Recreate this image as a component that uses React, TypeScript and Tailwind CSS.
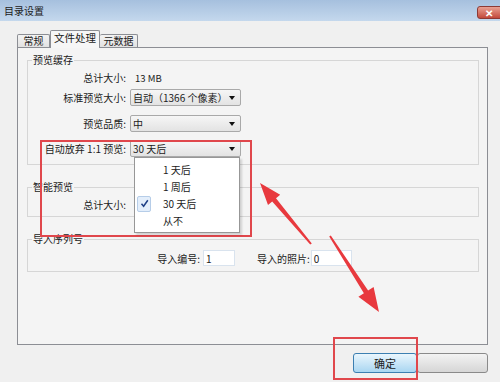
import React from 'react'

function Caret() {
  return <span className="mr-[5px] w-0 h-0 border-l-[3px] border-r-[3px] border-t-[4px] border-l-transparent border-r-transparent border-t-[#111]" />
}

function Dropdown({ value, children }: { value: string; children?: React.ReactNode }) {
  return (
    <div className="relative w-[111px] h-[17px]">
      <div className="flex items-center h-full border border-[#a9a9a9] rounded-[2px] bg-linear-to-b from-[#f6f6f6] to-[#e3e3e3] pl-[2px]">
        <span className="flex-1 whitespace-nowrap overflow-hidden">{value}</span>
        <Caret />
      </div>
      {children}
    </div>
  )
}

function Row({ label, children, className = '' }: { label: string; children?: React.ReactNode; className?: string }) {
  return (
    <div className={`flex items-center h-[17px] ${className}`}>
      <div className="w-[98px] text-right whitespace-nowrap">{label}</div>
      <div className="ml-[4px]">{children}</div>
    </div>
  )
}

function Group({ title, children, className = '' }: { title: string; children: React.ReactNode; className?: string }) {
  return (
    <fieldset className={`border border-[#d6d6d6] ${className}`}>
      <legend className="ml-[4px] px-[1px] leading-[12px]">{title}</legend>
      {children}
    </fieldset>
  )
}

const options = ['1 天后', '1 周后', '30 天后', '从不']

export default function App() {
  return (
    <div className="relative w-[500px] h-[382px] overflow-hidden bg-[#f0f0f0] text-[10px] text-[#1b1b1b] font-['Noto_Sans_CJK_SC','Noto_Sans',sans-serif]">
      {/* title bar */}
      <div className="flex h-[21px] bg-linear-to-b from-[#a6c0de] to-[#c4d8ed]">
        <span className="pl-[4px] pt-[5px] leading-[12px]">目录设置</span>
        <div className="ml-auto mt-[6px] -mr-[6px] w-[29px] h-[13px] rounded-[3px] border border-[#8d3a35] bg-linear-to-b from-[#e8a093] to-[#c2483b] flex items-center justify-center">
          <span className="text-white text-[10px] leading-none font-bold pr-[6px]">✕</span>
        </div>
      </div>

      {/* tabs */}
      <div className="flex items-end h-[17px] mt-[9px] pl-[17px]">
        <div className="w-[33px] h-[13px] border border-b-0 border-[#8c8e94] rounded-t-[2px] bg-linear-to-b from-[#f3f3f3] to-[#e2e2e2] flex items-center justify-center leading-none">常规</div>
        <div className="relative z-10 -mb-px w-[50px] h-[18px] border border-b-0 border-[#8c8e94] rounded-t-[2px] bg-[#f6f6f6] flex items-center justify-center leading-none pb-[2px] text-[10.5px]">文件处理</div>
        <div className="w-[38px] h-[13px] border border-b-0 border-l-0 border-[#8c8e94] rounded-t-[2px] bg-linear-to-b from-[#f3f3f3] to-[#e2e2e2] flex items-center justify-center leading-none">元数据</div>
      </div>

      {/* panel */}
      <div className="ml-[17px] w-[471px] h-[298px] border border-[#8c8e94] bg-[#f4f4f4] pl-[9px] pr-[8px] pt-[6px]">
        <Group title="预览缓存" className="pt-[3px] pb-[7px]">
          <Row label="总计大小:">
            <span className="pl-[5px] text-[9.5px]">13 MB</span>
          </Row>
          <Row label="标准预览大小:" className="mt-[3px]">
            <Dropdown value="自动（1366 个像素）" />
          </Row>
          <Row label="预览品质:" className="mt-[9px]">
            <Dropdown value="中" />
          </Row>
          <Row label="自动放弃 1:1 预览:" className="mt-[8px]">
            <Dropdown value="30 天后">
              <div className="absolute z-20 left-[4px] top-[17px] w-[106px] h-[76px] bg-white border border-[#979797] shadow-[2px_2px_2px_rgba(0,0,0,0.15)] pt-[3px]">
                {options.map((o, i) => (
                  <div key={o} className="flex items-center h-[17px]">
                    <div className={`ml-[2px] w-[14px] h-[16px] rounded-[2px] flex items-center justify-center ${i === 2 ? 'bg-[#e3eefb] border border-[#b6cde8]' : ''}`}>
                      {i === 2 && (
                        <svg width="9" height="9" viewBox="0 0 9 9">
                          <path d="M1.5 4.8 L3.6 7.2 L7.8 1.2" fill="none" stroke="#1d3f86" strokeWidth="1.5" />
                        </svg>
                      )}
                    </div>
                    <span className="ml-[12px] leading-none">{o}</span>
                  </div>
                ))}
              </div>
            </Dropdown>
          </Row>
        </Group>

        <Group title="智能预览" className="mt-[16px] pt-[3px] pb-[3px]">
          <Row label="总计大小:" />
        </Group>

        <Group title="导入序列号" className="mt-[16px] pt-[5px] pb-[5px]">
          <div className="flex items-center h-[16px]">
            <div className="w-[172px] text-right">导入编号:</div>
            <div className="ml-[3px] w-[32px] h-[16px] bg-white border border-[#d9e3ee] pl-[2px] flex items-center">1</div>
            <div className="ml-[22px]">导入的照片:</div>
            <div className="ml-[1px] w-[41px] h-[16px] bg-white border border-[#d9e3ee] pl-[2px] flex items-center">0</div>
          </div>
        </Group>
      </div>

      {/* buttons */}
      <div className="flex justify-end pr-[12px] mt-[8px]">
        <div className="w-[64px] h-[20px] rounded-[3px] border border-[#3c7fb1] bg-linear-to-b from-[#eaf6fd] to-[#a9d6f1] flex items-center justify-center text-[11px]">确定</div>
        <div className="w-[71px] h-[20px] rounded-[3px] border border-[#8a8a8a] bg-linear-to-b from-[#f3f3f3] to-[#d6d6d6]" />
      </div>

      {/* annotations */}
      <div className="absolute left-[40px] top-[140px] w-[212px] h-[97px] border-2 border-[#e0474c]" />
      <div className="absolute left-[333px] top-[337px] w-[85px] h-[43px] border-2 border-[#e0474c]" />
      <svg className="absolute left-0 top-0 pointer-events-none" width="500" height="382">
        <polygon fill="#e8393e" points="260,183 280.2,194.8 276.0,198.3 311.8,243.4 310.2,244.6 272.2,201.5 268.0,205.0" />
        <polygon fill="#e8393e" points="379,312 358.4,296.7 363.9,293.2 329.2,236.5 330.8,235.5 368.1,290.4 373.6,286.9" />
      </svg>
    </div>
  )
}
